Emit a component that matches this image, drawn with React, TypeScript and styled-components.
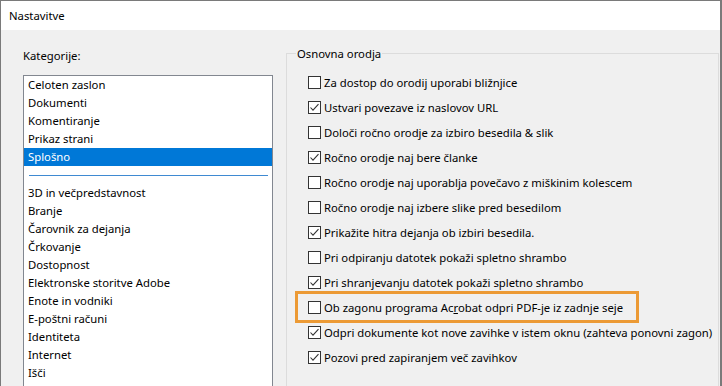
import React from "react";
import styled, { createGlobalStyle } from "styled-components";

const GlobalStyle = createGlobalStyle`
  html, body {
    margin: 0;
    padding: 0;
    background: #f0f0f0;
  }
  body {
    font-family: "Noto Sans", "Liberation Sans", sans-serif;
    font-size: 11.3px;
    color: #000;
  }
`;

type Option = { label: React.ReactNode; checked: boolean; highlight?: boolean };

const topCategories = ["Celoten zaslon", "Dokumenti", "Komentiranje", "Prikaz strani", "Splošno"];
const moreCategories = [
  "3D in večpredstavnost",
  "Branje",
  "Čarovnik za dejanja",
  "Črkovanje",
  "Dostopnost",
  "Elektronske storitve Adobe",
  "Enote in vodniki",
  "E-poštni računi",
  "Identiteta",
  "Internet",
  "Išči",
];

const options: Option[] = [
  { label: "Za dostop do orodij uporabi bližnjice", checked: false },
  { label: "Ustvari povezave iz naslovov URL", checked: true },
  { label: "Določi ročno orodje za izbiro besedila & slik", checked: false },
  { label: "Ročno orodje naj bere članke", checked: true },
  { label: "Ročno orodje naj uporablja povečavo z miškinim kolescem", checked: false },
  { label: "Ročno orodje naj izbere slike pred besedilom", checked: false },
  { label: "Prikažite hitra dejanja ob izbiri besedila.", checked: true },
  { label: "Pri odpiranju datotek pokaži spletno shrambo", checked: false },
  { label: "Pri shranjevanju datotek pokaži spletno shrambo", checked: true },
  {
    label: (
      <>
        Ob zagonu programa Ac<u>r</u>obat odpri PDF-je iz zadnje seje
      </>
    ),
    checked: false,
    highlight: true,
  },
  { label: "Odpri dokumente kot nove zavihke v istem oknu (zahteva ponovni zagon)", checked: true },
  { label: "Pozovi pred zapiranjem več zavihkov", checked: true },
];

const Check = ({ checked }: { checked: boolean }) => (
  <Box>
    {checked ? (
      <svg width="11" height="11" viewBox="0 0 11 11">
        <polyline points="1.5,5.5 4,8.2 9.5,2.2" fill="none" stroke="#333" strokeWidth="1.1" />
      </svg>
    ) : null}
  </Box>
);

const App = () => {
  return (
    <>
      <GlobalStyle />
      <Window>
        <TitleBar>Nastavitve</TitleBar>
        <Body>
          <LeftColumn>
            <Label>Kategorije:</Label>
            <ListBox>
              {topCategories.map((c) => (
                <Item key={c} selected={c === "Splošno"}>
                  {c}
                </Item>
              ))}
              <Separator />
              {moreCategories.map((c) => (
                <Item key={c}>{c}</Item>
              ))}
            </ListBox>
          </LeftColumn>
          <Group>
            <Legend>Osnovna orodja</Legend>
            {options.map((o, i) => (
              <Row key={i}>
                <Check checked={o.checked} />
                <RowText>{o.label}</RowText>
                {o.highlight ? <Highlight /> : null}
              </Row>
            ))}
          </Group>
        </Body>
      </Window>
    </>
  );
};

export default App;

const Window = styled.div`
  width: 722px;
  height: 386px;
  box-sizing: border-box;
  border-top: 1px solid #7a7a7a;
  border-left: 1px solid #7a7a7a;
  border-right: 2px solid #7a7a7a;
  background: #f0f0f0;
  overflow: hidden;
  display: flex;
  flex-direction: column;
`;

const TitleBar = styled.div`
  height: 29px;
  flex: none;
  background: #fff;
  padding-left: 8px;
  line-height: 29px;
`;

const Body = styled.div`
  flex: 1;
  display: flex;
  align-items: flex-start;
  min-height: 0;
`;

const LeftColumn = styled.div`
  width: 250px;
  margin-left: 22px;
  padding-top: 17px;
  flex: none;
  display: flex;
  flex-direction: column;
`;

const Label = styled.div`
  line-height: 18px;
  height: 18px;
`;

const ListBox = styled.div`
  margin-top: 10px;
  border: 1px solid #828790;
  background: #fff;
  height: 400px;
  display: flex;
  flex-direction: column;
`;

const Item = styled.div<{ selected?: boolean }>`
  height: 18px;
  line-height: 18px;
  padding-left: 4px;
  white-space: nowrap;
  background: ${({ selected }) => (selected ? "#0078d7" : "transparent")};
  color: ${({ selected }) => (selected ? "#fff" : "#000")};
`;

const Separator = styled.div`
  height: 18px;
  display: flex;
  align-items: center;
  padding: 0 4px 0 5px;

  &::after {
    content: "";
    flex: 1;
    height: 1px;
    background: #3f8ad2;
  }
`;

const Group = styled.fieldset`
  margin: 15px 0 0 13px;
  width: 433px;
  height: 400px;
  box-sizing: border-box;
  border: 1px solid #dcdcdc;
  padding: 8px 0 0 21px;
  min-width: 0;
`;

const Legend = styled.legend`
  margin-left: -12px;
  padding: 0 1px;
  line-height: 17px;
`;

const Row = styled.div`
  position: relative;
  height: 25px;
  display: flex;
  align-items: center;
  gap: 3px;
  white-space: nowrap;
`;

const Box = styled.span`
  width: 13px;
  height: 13px;
  box-sizing: border-box;
  border: 1px solid #333;
  background: #fff;
  flex: none;
  display: flex;
  align-items: center;
  justify-content: center;
`;

const RowText = styled.span`
  line-height: 16px;

  u {
    text-decoration-thickness: 1px;
  }
`;

const Highlight = styled.span`
  position: absolute;
  left: -13px;
  top: -4px;
  width: 344px;
  height: 32px;
  box-sizing: border-box;
  border: 3px solid #ec9a35;
  pointer-events: none;
`;
